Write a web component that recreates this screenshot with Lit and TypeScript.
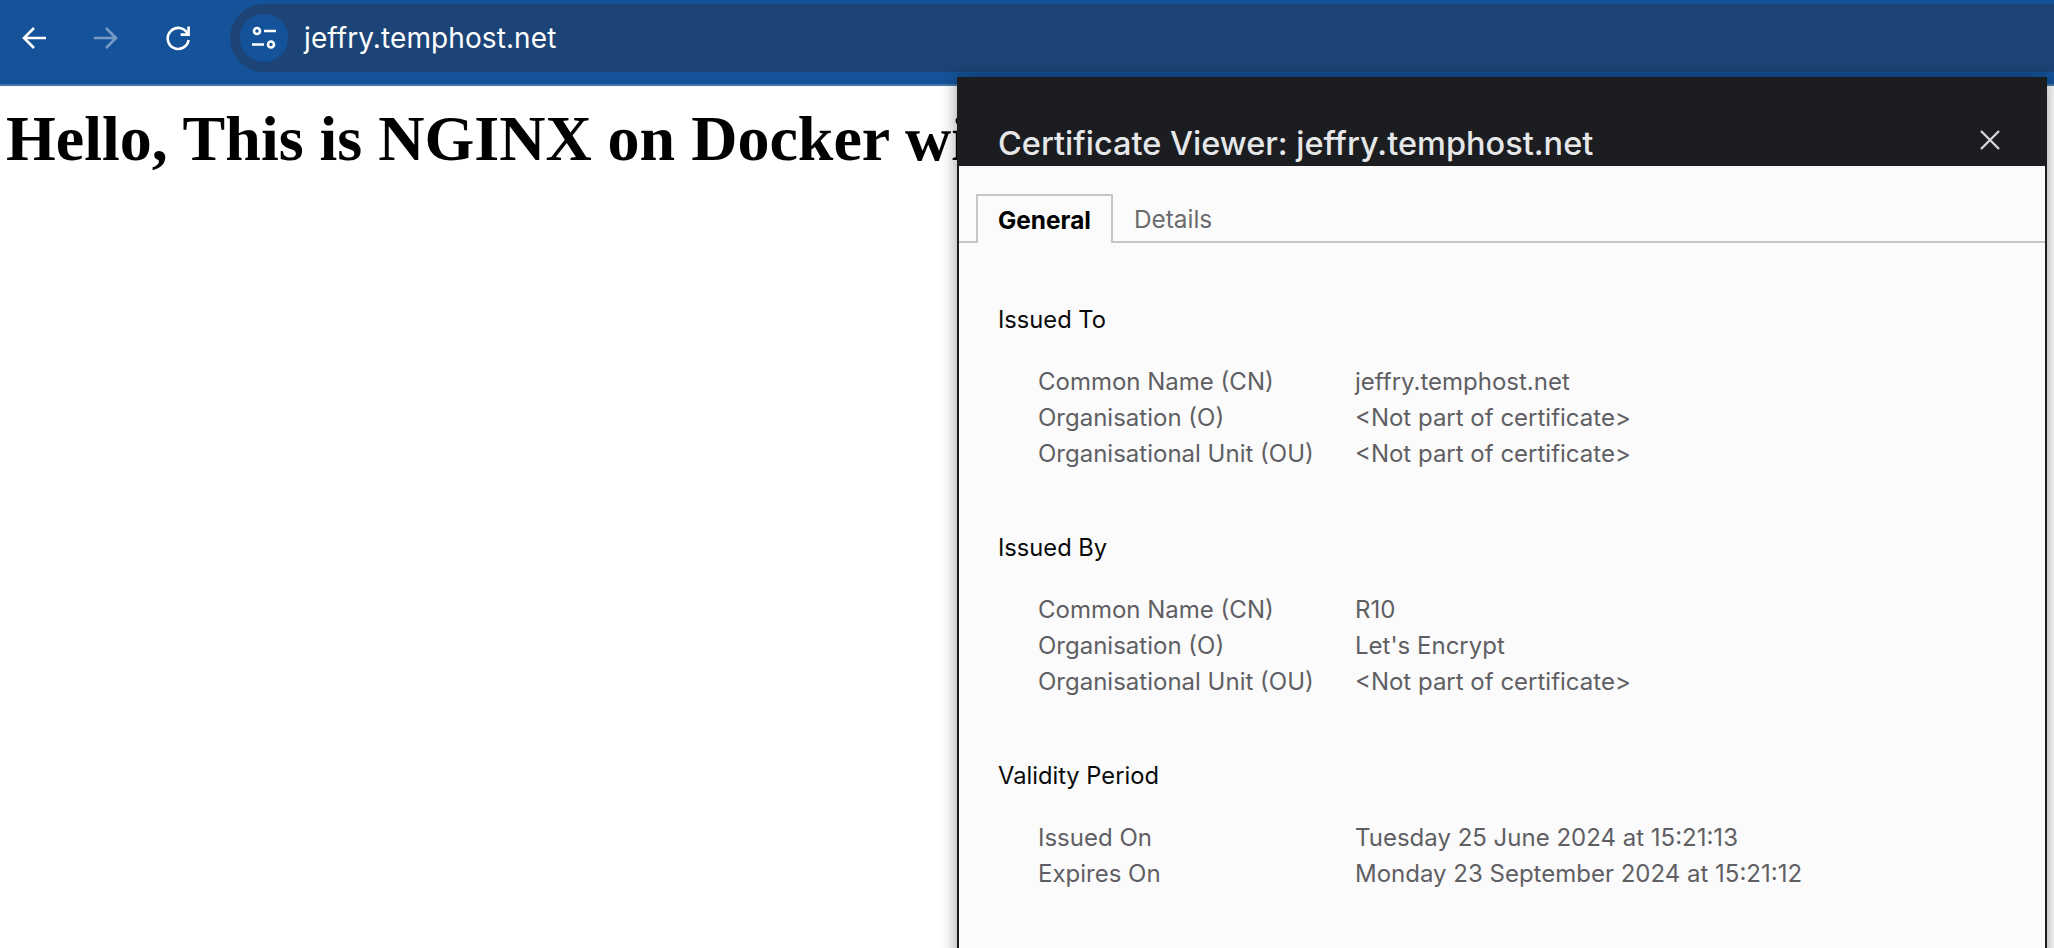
import { LitElement, html, css } from "lit";
import { customElement } from "lit/decorators.js";

interface Section { title: string; rows: [string, string][]; }

const NP = "<Not part of certificate>";
const SECTIONS: Section[] = [
  { title: "Issued To", rows: [["Common Name (CN)", "jeffry.temphost.net"], ["Organisation (O)", NP], ["Organisational Unit (OU)", NP]] },
  { title: "Issued By", rows: [["Common Name (CN)", "R10"], ["Organisation (O)", "Let's Encrypt"], ["Organisational Unit (OU)", NP]] },
  { title: "Validity Period", rows: [["Issued On", "Tuesday 25 June 2024 at 15:21:13"], ["Expires On", "Monday 23 September 2024 at 15:21:12"]] },
];

@customElement("app-root")
export class AppRoot extends LitElement {
  static styles = css`
    :host { display: block; position: relative; width: 100%; height: 100vh; overflow: hidden; background: #fff; }
    .toolbar { display: flex; align-items: flex-start; background: #14539a; border-bottom: 2px solid #3f78a8; padding-top: 4px; height: 80px; }
    .nav { width: 68px; height: 68px; margin-right: 4px; display: flex; align-items: center; justify-content: center; flex: none; color: #fff; }
    .nav.off { opacity: .42; }
    .omni { flex: 1; margin-left: 14px; height: 68px; background: #1c4476; border-radius: 34px 0 0 34px; display: flex; align-items: center; padding-left: 10px; }
    .site { width: 48px; height: 48px; border-radius: 50%; background: #14539a; display: flex; align-items: center; justify-content: center; color: #fff; flex: none; }
    .url { margin-left: 16px; color: #fff; font: 400 28px/1 Inter, "Liberation Sans", sans-serif; letter-spacing: .1px; }
    h1 { margin: 0; padding: 17px 0 0 6px; font: 700 64px/72px "Liberation Serif", serif; color: #000; white-space: nowrap; }
    .dialog { position: absolute; left: 957px; top: 77px; width: 1090px; bottom: -20px; box-sizing: border-box; border: 2px solid #1b1d20; border-top: 0; background: #fbfbfc; box-shadow: 0 0 16px rgba(0,0,0,.4); font-family: Inter, "Liberation Sans", sans-serif; }
    .head { height: 89px; background: #1b1d20; display: flex; align-items: flex-end; justify-content: space-between; padding: 0 45px 0 39px; }
    .title { color: #e6e7e9; font-size: 32.5px; font-weight: 500; line-height: 42px; margin-bottom: 1px; white-space: nowrap; }
    .close { color: #d4d5d7; margin-bottom: 16px; display: flex; }
    .tabs { display: flex; margin-top: 28px; padding-left: 17px; height: 47px; border-bottom: 2px solid #c6c6c6; }
    .tab { height: 47px; box-sizing: border-box; padding: 2px 22px 0 21px; display: flex; align-items: center; font-size: 24.4px; color: #6b6b6e; }
    .tab.on { border: 2px solid #c6c6c6; border-bottom: 0; background: #fbfbfc; color: #000; font-weight: 700; height: 49px; padding: 0 20px; }
    .body { padding: 59px 0 0 39px; display: flex; flex-direction: column; gap: 58px; }
    .sec-title { font-size: 23.7px; line-height: 36px; color: #0a0a0a; margin-bottom: 26px; }
    .row { display: grid; grid-template-columns: 317px auto; padding-left: 40px; font-size: 24px; line-height: 36px; color: #5f5f63; white-space: nowrap; }
  `;

  render() {
    return html`
      <div class="toolbar">
        <div class="nav"><svg width="26" height="26" viewBox="0 0 26 26" fill="none" stroke="currentColor" stroke-width="2.6"><path d="M25 13H3M13 3 3 13l10 10"/></svg></div>
        <div class="nav off"><svg width="26" height="26" viewBox="0 0 26 26" fill="none" stroke="currentColor" stroke-width="2.6"><path d="M1 13h22M13 3l10 10-10 10"/></svg></div>
        <div class="nav"><svg width="26" height="26" viewBox="0 0 26 26" fill="none" stroke="currentColor" stroke-width="2.6"><path d="M22.5 8.5A10.5 10.5 0 1 0 23.6 15"/><path d="M23.6 1.6v8h-8"/></svg></div>
        <div class="omni">
          <div class="site"><svg width="26" height="24" viewBox="0 0 26 24" fill="none" stroke="currentColor" stroke-width="2.6"><circle cx="6" cy="5" r="3"/><circle cx="20" cy="18.5" r="3"/><path d="M13 5h12M1 18.5h12"/></svg></div>
          <span class="url">jeffry.temphost.net</span>
        </div>
      </div>
      <h1>Hello, This is NGINX on Docker with</h1>
      <div class="dialog">
        <div class="head">
          <span class="title">Certificate Viewer: jeffry.temphost.net</span>
          <span class="close"><svg width="20" height="20" viewBox="0 0 20 20" fill="none" stroke="currentColor" stroke-width="2.4"><path d="M1 1l18 18M19 1 1 19"/></svg></span>
        </div>
        <div class="tabs">
          <div class="tab on"><span>General</span></div>
          <div class="tab">Details</div>
        </div>
        <div class="body">
          ${SECTIONS.map(s => html`
            <section>
              <div class="sec-title">${s.title}</div>
              ${s.rows.map(r => html`<div class="row"><span>${r[0]}</span><span>${r[1]}</span></div>`)}
            </section>`)}
        </div>
      </div>
    `;
  }
}
